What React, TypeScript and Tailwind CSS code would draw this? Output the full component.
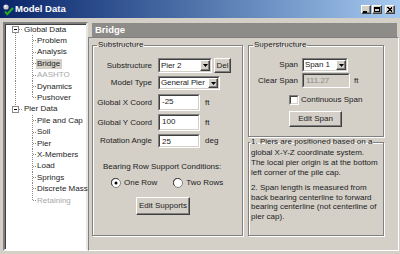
import React from 'react'

const raised =
  'bg-[#d4d0c8] border border-t-white border-l-white border-b-[#404040] border-r-[#404040] shadow-[inset_-1px_-1px_0_#808080]'
const etched = 'border border-[#808080] shadow-[inset_1px_1px_0_#fff,1px_1px_0_#fff]'

function Sunken({ className = '', children }: { className?: string; children?: React.ReactNode }) {
  return (
    <div className={`border border-t-[#808080] border-l-[#808080] border-b-white border-r-white ${className}`}>
      <div className="w-full h-full border border-t-[#404040] border-l-[#404040] border-b-[#d4d0c8] border-r-[#d4d0c8] flex items-stretch">
        {children}
      </div>
    </div>
  )
}

function Combo({ value, className }: { value: string; className: string }) {
  return (
    <Sunken className={`bg-white ${className}`}>
      <span className="flex-1 min-w-0 pl-px flex items-center whitespace-nowrap tracking-[-0.1px]">{value}</span>
      <span className={`${raised} w-[10px] shrink-0 flex items-center justify-center`}>
        <svg width="5" height="3">
          <path d="M0 0h5L2.5 3z" fill="#000" />
        </svg>
      </span>
    </Sunken>
  )
}

function TextBox({ value, className, disabled }: { value: string; className: string; disabled?: boolean }) {
  return (
    <Sunken className={`${disabled ? 'bg-[#d4d0c8] text-[#8a8a8a]' : 'bg-white'} ${className}`}>
      <span className="pl-[2px] pt-[1px]">{value}</span>
    </Sunken>
  )
}

function Radio({ checked }: { checked?: boolean }) {
  return (
    <svg width="10" height="10">
      <circle cx="5" cy="5" r="4.5" fill="#fff" stroke="#808080" />
      <path d="M1.5 7.5A4 4 0 0 1 7.5 1.5" fill="none" stroke="#404040" />
      {checked && <circle cx="5" cy="5" r="1.5" fill="#000" />}
    </svg>
  )
}

const dot = { stroke: '#8a8a8a', strokeDasharray: '1 1', shapeRendering: 'crispEdges' as const }

function RootLines({ first }: { first?: boolean }) {
  return (
    <svg width="18" height="100%" className="shrink-0 overflow-visible">
      {first ? <line x1="10.5" y1="9" x2="10.5" y2="12" {...dot} /> : <line x1="10.5" y1="0" x2="10.5" y2="3" {...dot} />}
      <line x1="14" y1="5.5" x2="17" y2="5.5" {...dot} />
      <rect x="7.5" y="2.5" width="6" height="6" fill="#fff" stroke="#8a8a8a" shapeRendering="crispEdges" />
      <line x1="9" y1="5.5" x2="12" y2="5.5" stroke="#000" shapeRendering="crispEdges" />
    </svg>
  )
}

function ChildLines({ last, rootLine }: { last?: boolean; rootLine?: boolean }) {
  return (
    <svg width="31" height="100%" className="shrink-0 overflow-visible">
      {rootLine && <line x1="10.5" y1="0" x2="10.5" y2="12" {...dot} />}
      <line x1="27.5" y1="0" x2="27.5" y2={last ? 6 : 12} {...dot} />
      <line x1="28" y1="5.5" x2="31" y2="5.5" {...dot} />
    </svg>
  )
}

const globalKids = ['Problem', 'Analysis', 'Bridge', 'AASHTO', 'Dynamics', 'Pushover']
const pierKids = ['Pile and Cap', 'Soil', 'Pier', 'X-Members', 'Load', 'Springs', 'Discrete Mass', 'Retaining']
const disabled = ['AASHTO', 'Retaining']

function Tree() {
  return (
    <div className="mt-[4px] w-[85px] h-[229px] border-2 border-t-[#808080] border-l-[#808080] border-b-white border-r-[#e8e6e2] shadow-[inset_1px_1px_0_#404040] bg-white">
      <div className="flex h-[11.4px] items-center">
        <RootLines first />
        <span className="pl-[1px]">Global Data</span>
      </div>
      {globalKids.map((k, i) => (
        <div key={k} className="flex h-[11.4px] items-center">
          <ChildLines rootLine last={i === globalKids.length - 1} />
          <span
            className={`pl-[1px] pr-[2px] ${k === 'Bridge' ? 'bg-[#d4d0c8]' : ''} ${disabled.includes(k) ? 'text-[#a8a8a8]' : ''}`}
          >
            {k}
          </span>
        </div>
      ))}
      <div className="flex h-[11.4px] items-center">
        <RootLines />
        <span className="pl-[1px]">Pier Data</span>
      </div>
      {pierKids.map((k, i) => (
        <div key={k} className="flex h-[11.4px] items-center">
          <ChildLines last={i === pierKids.length - 1} />
          <span className={`pl-[1px] pr-[2px] whitespace-nowrap ${disabled.includes(k) ? 'text-[#a8a8a8]' : ''}`}>{k}</span>
        </div>
      ))}
    </div>
  )
}

function CaptionButton({ kind, className = '' }: { kind: 'min' | 'max' | 'close'; className?: string }) {
  return (
    <div className={`${raised} w-[10px] h-[9px] flex items-center justify-center ${className}`}>
      <svg width="8" height="7" shapeRendering="crispEdges">
        {kind === 'min' && <rect x="1" y="5" width="4" height="1.5" fill="#000" />}
        {kind === 'max' && (
          <>
            <rect x="1.5" y="1.5" width="5" height="4" fill="none" stroke="#000" />
            <rect x="1" y="1" width="6" height="1.5" fill="#000" />
          </>
        )}
        {kind === 'close' && <path d="M1.5 1.5l5 4M6.5 1.5l-5 4" stroke="#000" strokeWidth="1.3" />}
      </svg>
    </div>
  )
}

function AppIcon() {
  return (
    <svg width="12" height="13" className="ml-[2px]">
      <circle cx="4" cy="4" r="2.6" fill="#c8c8c8" />
      <circle cx="3.3" cy="3.3" r="1" fill="#fff" />
      <path d="M3 8.5l2.2 2.8L11 5" fill="none" stroke="#22b022" strokeWidth="2" />
    </svg>
  )
}

export default function App() {
  return (
    <div className="w-[400px] h-[254px] bg-[#d4d0c8] overflow-hidden text-[8px] leading-[10px] text-[#1c1c1c] font-['Liberation_Sans',Arial,sans-serif]">
      {/* Title bar */}
      <div className="h-[18px] flex items-center bg-linear-to-r from-[#0a246a] to-[#a6caf0]">
        <AppIcon />
        <span className="ml-px text-white font-bold text-[9.5px]">Model Data</span>
        <div className="ml-auto mr-[5px] flex items-center">
          <CaptionButton kind="min" />
          <CaptionButton kind="max" className="ml-px" />
          <CaptionButton kind="close" className="ml-[3px]" />
        </div>
      </div>

      <div className="flex h-[236px] pl-[3px] pr-px">
        <Tree />

        <div className="flex-1 flex flex-col">
          <div className="mt-[5px] ml-[4px] mr-[2px] h-[14px] bg-[#8e8c89] text-white font-bold text-[9.5px] pl-[3px] flex items-center">
            Bridge
          </div>

          <div className="h-[214px] border border-t-[#808080] border-l-[#808080] border-b-white border-r-white flex pl-[3px] pt-[2px]">
            {/* Substructure */}
            <fieldset className={`${etched} w-[151px] h-[196px] min-w-0`}>
              <legend className="ml-[4px] px-px">Substructure</legend>
              <div className="flex flex-col">
                <div className="mt-[8px] h-[15px] flex items-center">
                  <span className="w-[59px] text-right">Substructure</span>
                  <Combo value="Pier 2" className="ml-[6px] w-[54px] h-[15px]" />
                  <button className={`${raised} ml-[2px] w-[17px] h-[15px] leading-none`}>Del</button>
                </div>
                <div className="mt-[3px] h-[14px] flex items-center">
                  <span className="w-[59px] text-right">Model Type</span>
                  <Combo value="General Pier" className="ml-[6px] w-[62px] h-[14px]" />
                </div>
                <div className="mt-[4px] h-[17px] flex items-center">
                  <span className="w-[59px] text-right">Global X Coord</span>
                  <TextBox value="-25" className="ml-[6px] w-[42px] h-[17px]" />
                  <span className="ml-[5px]">ft</span>
                </div>
                <div className="mt-[3px] h-[17px] flex items-center">
                  <span className="w-[59px] text-right">Global Y Coord</span>
                  <TextBox value="100" className="ml-[6px] w-[42px] h-[17px]" />
                  <span className="ml-[5px]">ft</span>
                </div>
                <div className="mt-[3px] h-[14px] flex items-center">
                  <span className="w-[59px] text-right">Rotation Angle</span>
                  <TextBox value="25" className="ml-[6px] w-[42px] h-[14px]" />
                  <span className="ml-[5px]">deg</span>
                </div>
                <div className="mt-[14px] pl-[10px]">Bearing Row Support Conditions:</div>
                <div className="mt-[5px] h-[12px] pl-[18px] flex items-center">
                  <Radio checked />
                  <span className="ml-[3px]">One Row</span>
                  <span className="ml-[16px] flex">
                    <Radio />
                  </span>
                  <span className="ml-[3px]">Two Rows</span>
                </div>
                <button className={`${raised} mt-[8px] ml-[43px] w-[54px] h-[18px] leading-none`}>Edit Supports</button>
              </div>
            </fieldset>

            <div className="ml-[5px] w-[136px] flex flex-col">
              {/* Superstructure */}
              <fieldset className={`${etched} h-[97px] min-w-0`}>
                <legend className="ml-[4px] px-px">Superstructure</legend>
                <div className="flex flex-col">
                  <div className="mt-[8px] h-[14px] flex items-center">
                    <span className="w-[49px] text-right">Span</span>
                    <Combo value="Span 1" className="ml-[4px] w-[46px] h-[14px]" />
                  </div>
                  <div className="mt-px h-[15px] flex items-center">
                    <span className="w-[49px] text-right">Clear Span</span>
                    <TextBox value="111.27" disabled className="ml-[4px] w-[48px] h-[15px]" />
                    <span className="ml-[4px]">ft</span>
                  </div>
                  <div className="mt-[6px] h-[11px] pl-[40px] flex items-center">
                    <Sunken className="w-[10px] h-[10px] bg-white" />
                    <span className="ml-[2px]">Continuous Span</span>
                  </div>
                  <button className={`${raised} mt-[6px] ml-[40px] w-[53px] h-[16px] leading-none`}>Edit Span</button>
                </div>
              </fieldset>

              {/* Notes */}
              <fieldset className={`${etched} h-[99px] min-w-0 whitespace-nowrap`}>
                <legend className="ml-px px-px">1. Piers are positioned based on a</legend>
                <p className="pl-[2px] mt-px leading-[10px]">
                  global X-Y-Z coordinate system.
                  <br />
                  The local pier origin is at the bottom
                  <br />
                  left corner of the pile cap.
                </p>
                <p className="pl-[2px] mt-[5px] leading-[9.6px]">
                  2. Span length is measured from
                  <br />
                  back bearing centerline to forward
                  <br />
                  bearing centerline (not centerline of
                  <br />
                  pier cap).
                </p>
              </fieldset>
            </div>
          </div>
        </div>
      </div>
    </div>
  )
}
